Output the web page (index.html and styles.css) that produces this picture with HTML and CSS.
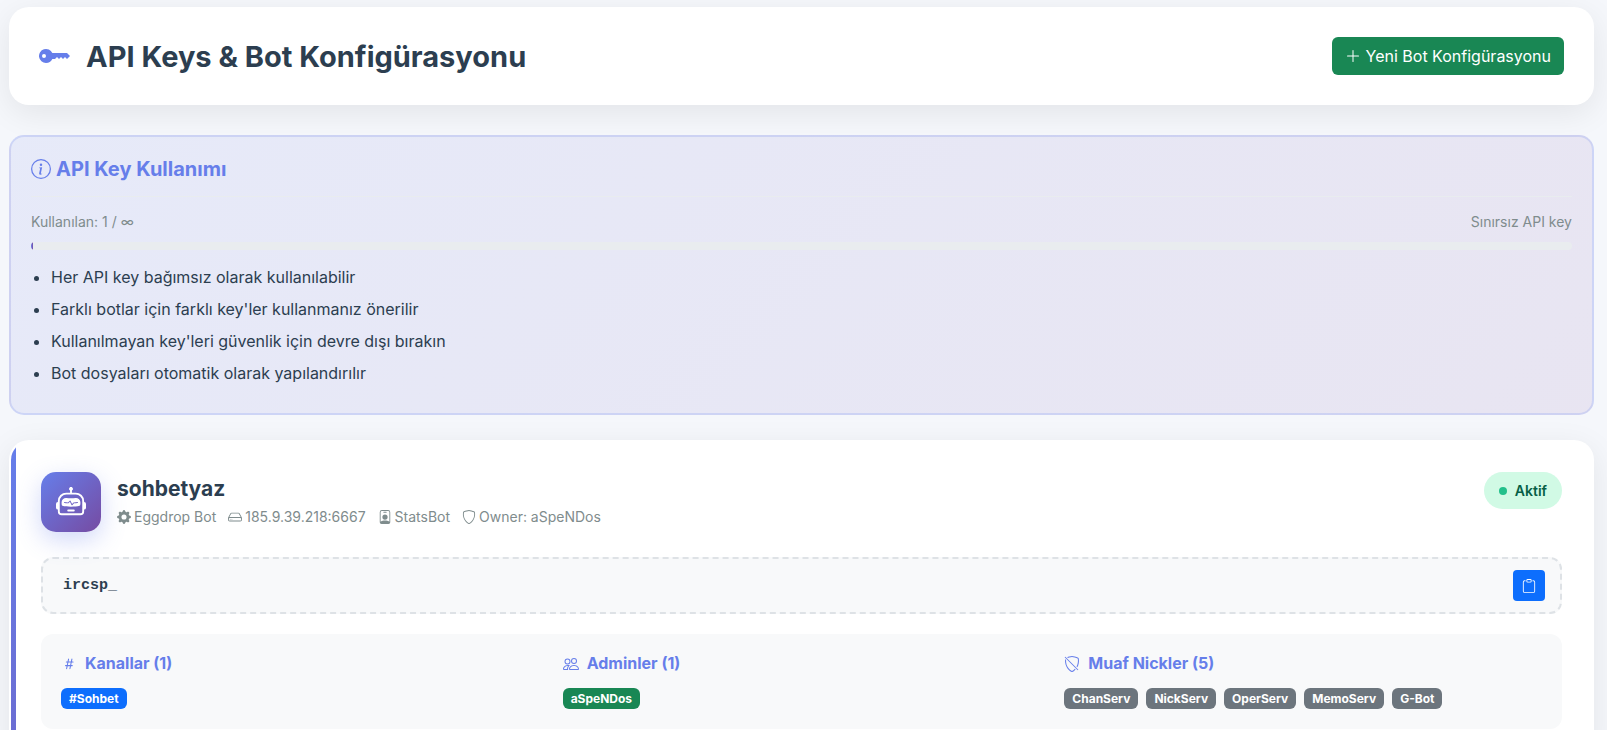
FILE: index.html
```html
<!DOCTYPE html>
<html lang="tr">
<head>
    <meta charset="UTF-8">
    <meta name="viewport" content="width=device-width, initial-scale=1.0">
    <title>API Keys & Bot Konfigürasyonu</title>
    <link rel="stylesheet" href="styles.css">
</head>
<body>

    <header class="page-header">
        <h1>
            <svg class="title-icon" viewBox="0 0 16 16" fill="currentColor" aria-hidden="true"><path d="M3.5 11.5a3.5 3.5 0 1 1 3.163-5H14L15.5 8 14 9.5l-1-1-1 1-1-1-1 1-1-1-1 1H6.663a3.5 3.5 0 0 1-3.163 2M2.5 9a1 1 0 1 0 0-2 1 1 0 0 0 0 2"/></svg>
            API Keys &amp; Bot Konfigürasyonu
        </h1>
        <button type="button" class="btn btn-success">
            <svg class="icon" viewBox="0 0 16 16" fill="currentColor" aria-hidden="true"><path d="M8 2a.5.5 0 0 1 .5.5v5h5a.5.5 0 0 1 0 1h-5v5a.5.5 0 0 1-1 0v-5h-5a.5.5 0 0 1 0-1h5v-5A.5.5 0 0 1 8 2"/></svg>
            Yeni Bot Konfigürasyonu
        </button>
    </header>

    <!-- API key kullanımı -->
    <section class="info-box">
        <h2>
            <svg class="icon-lg" viewBox="0 0 16 16" fill="currentColor" aria-hidden="true"><path d="M8 15A7 7 0 1 1 8 1a7 7 0 0 1 0 14m0 1A8 8 0 1 0 8 0a8 8 0 0 0 0 16"/><path d="m8.93 6.588-2.29.287-.082.38.45.083c.294.07.352.176.288.469l-.738 3.468c-.194.897.105 1.319.808 1.319.545 0 1.178-.252 1.465-.598l.088-.416c-.2.176-.492.246-.686.246-.275 0-.375-.193-.304-.533zM9 4.5a1 1 0 1 1-2 0 1 1 0 0 1 2 0"/></svg>
            API Key Kullanımı
        </h2>
        <div class="usage">
            <div class="usage-labels">
                <span>Kullanılan: 1 / ∞</span>
                <span>Sınırsız API key</span>
            </div>
            <div class="usage-bar">
                <div class="usage-fill"></div>
            </div>
        </div>
        <ul class="info-list">
            <li>Her API key bağımsız olarak kullanılabilir</li>
            <li>Farklı botlar için farklı key'ler kullanmanız önerilir</li>
            <li>Kullanılmayan key'leri güvenlik için devre dışı bırakın</li>
            <li>Bot dosyaları otomatik olarak yapılandırılır</li>
        </ul>
    </section>

    <!-- Bot kartı -->
    <article class="bot-card">
        <div class="bot-head">
            <div class="bot-avatar">
                <svg viewBox="0 0 16 16" fill="currentColor" aria-hidden="true"><path d="M6 12.5a.5.5 0 0 1 .5-.5h3a.5.5 0 0 1 0 1h-3a.5.5 0 0 1-.5-.5M3 8.062C3 6.76 4.235 5.765 5.53 5.886a26.6 26.6 0 0 0 4.94 0C11.765 5.765 13 6.76 13 8.062v1.157a.93.93 0 0 1-.765.935c-.845.147-2.34.346-4.235.346s-3.39-.2-4.235-.346A.93.93 0 0 1 3 9.219zm4.542-.827a.25.25 0 0 0-.217.068l-.92.9a25 25 0 0 1-1.871-.183.25.25 0 0 0-.068.495c.55.076 1.232.149 2.02.193a.25.25 0 0 0 .189-.071l.754-.736.847 1.71a.25.25 0 0 0 .404.062l.932-.97a25 25 0 0 0 1.922-.188.25.25 0 0 0-.068-.495c-.538.074-1.207.145-1.98.189a.25.25 0 0 0-.166.076l-.754.785-.842-1.7a.25.25 0 0 0-.182-.135"/><path d="M8.5 1.866a1 1 0 1 0-1 0V3h-2A4.5 4.5 0 0 0 1 7.5V8a1 1 0 0 0-1 1v2a1 1 0 0 0 1 1v1a2 2 0 0 0 2 2h10a2 2 0 0 0 2-2v-1a1 1 0 0 0 1-1V9a1 1 0 0 0-1-1v-.5A4.5 4.5 0 0 0 10.5 3h-2zM14 7.5V13a1 1 0 0 1-1 1H3a1 1 0 0 1-1-1V7.5A3.5 3.5 0 0 1 5.5 4h5A3.5 3.5 0 0 1 14 7.5"/></svg>
            </div>
            <div class="bot-info">
                <h3>sohbetyaz</h3>
                <div class="bot-meta">
                    <span>
                        <svg class="icon-sm" viewBox="0 0 16 16" fill="currentColor" aria-hidden="true"><path d="M9.405 1.05c-.413-1.4-2.397-1.4-2.81 0l-.1.34a1.464 1.464 0 0 1-2.105.872l-.31-.17c-1.283-.698-2.686.705-1.987 1.987l.169.311c.446.82.023 1.841-.872 2.105l-.34.1c-1.4.413-1.4 2.397 0 2.81l.34.1a1.464 1.464 0 0 1 .872 2.105l-.17.31c-.698 1.283.705 2.686 1.987 1.987l.311-.169a1.464 1.464 0 0 1 2.105.872l.1.34c.413 1.4 2.397 1.4 2.81 0l.1-.34a1.464 1.464 0 0 1 2.105-.872l.31.17c1.283.698 2.686-.705 1.987-1.987l-.169-.311a1.464 1.464 0 0 1 .872-2.105l.34-.1c1.4-.413 1.4-2.397 0-2.81l-.34-.1a1.464 1.464 0 0 1-.872-2.105l.17-.31c.698-1.283-.705-2.686-1.987-1.987l-.311.169a1.464 1.464 0 0 1-2.105-.872zM8 10.93a2.929 2.929 0 1 1 0-5.86 2.929 2.929 0 0 1 0 5.858z"/></svg>
                        Eggdrop Bot
                    </span>
                    <span>
                        <svg class="icon-sm" viewBox="0 0 16 16" fill="currentColor" aria-hidden="true"><path d="M4.5 11a.5.5 0 1 0 0-1 .5.5 0 0 0 0 1M3 10.5a.5.5 0 1 1-1 0 .5.5 0 0 1 1 0"/><path d="M16 11a2 2 0 0 1-2 2H2a2 2 0 0 1-2-2V9.51c0-.418.105-.83.305-1.197l2.472-4.531A1.5 1.5 0 0 1 4.094 3h7.812a1.5 1.5 0 0 1 1.317.782l2.472 4.53c.2.368.305.78.305 1.198zM3.655 4.26 1.592 8.043Q1.79 8 2 8h12q.21 0 .408.042L12.345 4.26a.5.5 0 0 0-.439-.26H4.094a.5.5 0 0 0-.44.26zM1 10v1a1 1 0 0 0 1 1h12a1 1 0 0 0 1-1v-1a1 1 0 0 0-1-1H2a1 1 0 0 0-1 1"/></svg>
                        185.9.39.218:6667
                    </span>
                    <span>
                        <svg class="icon-sm" viewBox="0 0 16 16" fill="currentColor" aria-hidden="true"><path d="M6.5 2a.5.5 0 0 0 0 1h3a.5.5 0 0 0 0-1zM11 8a3 3 0 1 1-6 0 3 3 0 0 1 6 0"/><path d="M4.5 0A2.5 2.5 0 0 0 2 2.5V14a2 2 0 0 0 2 2h8a2 2 0 0 0 2-2V2.5A2.5 2.5 0 0 0 11.5 0zM3 2.5A1.5 1.5 0 0 1 4.5 1h7A1.5 1.5 0 0 1 13 2.5v10.795a4.2 4.2 0 0 0-.776-.492C11.392 12.387 10.063 12 8 12s-3.392.387-4.224.803a4.2 4.2 0 0 0-.776.492z"/></svg>
                        StatsBot
                    </span>
                    <span>
                        <svg class="icon-sm" viewBox="0 0 16 16" fill="currentColor" aria-hidden="true"><path d="M5.338 1.59a61 61 0 0 0-2.837.856.48.48 0 0 0-.328.39c-.554 4.157.726 7.19 2.253 9.188a10.7 10.7 0 0 0 2.287 2.233c.346.244.652.42.893.533q.18.085.293.118a1 1 0 0 0 .101.025 1 1 0 0 0 .1-.025q.114-.034.294-.118c.24-.113.547-.29.893-.533a10.7 10.7 0 0 0 2.287-2.233c1.527-1.997 2.807-5.031 2.253-9.188a.48.48 0 0 0-.328-.39c-.651-.213-1.75-.56-2.837-.855C9.552 1.29 8.531 1.067 8 1.067c-.53 0-1.552.223-2.662.524zM5.072.56C6.157.265 7.31 0 8 0s1.843.265 2.928.56c1.11.3 2.229.655 2.887.87a1.54 1.54 0 0 1 1.044 1.262c.596 4.477-.787 7.795-2.465 9.99a11.8 11.8 0 0 1-2.517 2.453 7 7 0 0 1-1.048.625c-.28.132-.581.24-.829.24s-.548-.108-.829-.24a7 7 0 0 1-1.048-.625 11.8 11.8 0 0 1-2.517-2.453C1.928 10.487.545 7.169 1.141 2.692A1.54 1.54 0 0 1 2.185 1.43 63 63 0 0 1 5.072.56"/></svg>
                        Owner: aSpeNDos
                    </span>
                </div>
            </div>
            <span class="status">Aktif</span>
        </div>

        <div class="key-box">
            <code>ircsp_</code>
            <button type="button" class="btn btn-copy" aria-label="Kopyala">
                <svg class="icon-sm" viewBox="0 0 16 16" fill="currentColor" aria-hidden="true"><path d="M4 1.5H3a2 2 0 0 0-2 2V14a2 2 0 0 0 2 2h10a2 2 0 0 0 2-2V3.5a2 2 0 0 0-2-2h-1v1h1a1 1 0 0 1 1 1V14a1 1 0 0 1-1 1H3a1 1 0 0 1-1-1V3.5a1 1 0 0 1 1-1h1z"/><path d="M9.5 1a.5.5 0 0 1 .5.5v1a.5.5 0 0 1-.5.5h-3a.5.5 0 0 1-.5-.5v-1a.5.5 0 0 1 .5-.5zm-3-1A1.5 1.5 0 0 0 5 1.5v1A1.5 1.5 0 0 0 6.5 4h3A1.5 1.5 0 0 0 11 2.5v-1A1.5 1.5 0 0 0 9.5 0z"/></svg>
            </button>
        </div>

        <div class="bot-settings">
            <div>
                <h4>
                    <svg class="icon" viewBox="0 0 16 16" fill="currentColor" aria-hidden="true"><path d="M8.39 12.648a1 1 0 0 0-.015.18c0 .305.21.508.5.508.266 0 .492-.172.555-.477l.554-2.703h1.204c.421 0 .617-.234.617-.547 0-.312-.188-.53-.617-.53h-.985l.516-2.524h1.265c.43 0 .618-.227.618-.547 0-.313-.188-.524-.618-.524h-1.046l.476-2.304a1 1 0 0 0 .016-.164.51.51 0 0 0-.516-.516.54.54 0 0 0-.539.43l-.523 2.554H7.617l.477-2.304c.008-.04.015-.118.015-.164a.51.51 0 0 0-.523-.516.54.54 0 0 0-.531.43L6.53 5.484H5.414c-.43 0-.617.22-.617.532s.187.539.617.539h.906l-.515 2.523H4.609c-.421 0-.609.219-.609.531s.188.547.61.547h.976l-.516 2.492c-.008.04-.015.125-.015.18 0 .305.21.508.5.508.265 0 .492-.172.554-.477l.555-2.703h2.242zm-1-6.109h2.266l-.515 2.563H6.859l.532-2.563z"/></svg>
                    Kanallar (1)
                </h4>
                <div class="tags">
                    <span class="tag tag-primary">#Sohbet</span>
                </div>
            </div>
            <div>
                <h4>
                    <svg class="icon" viewBox="0 0 16 16" fill="currentColor" aria-hidden="true"><path d="M15 14s1 0 1-1-1-4-5-4-5 3-5 4 1 1 1 1zm-7.978-1L7 12.996c.001-.264.167-1.03.76-1.72C8.312 10.629 9.282 10 11 10c1.717 0 2.687.63 3.24 1.276.593.69.758 1.457.76 1.72l-.008.002-.014.002zM11 7a2 2 0 1 0 0-4 2 2 0 0 0 0 4m3-2a3 3 0 1 1-6 0 3 3 0 0 1 6 0M6.936 9.28a6 6 0 0 0-1.23-.247A7 7 0 0 0 5 9c-4 0-5 3-5 4q0 1 1 1h4.216A2.24 2.24 0 0 1 5 13c0-1.01.377-2.042 1.09-2.904.243-.294.526-.569.846-.816M4.92 10A5.5 5.5 0 0 0 4 13H1c0-.26.164-1.03.76-1.724.545-.636 1.492-1.256 3.16-1.275ZM1.5 5.5a3 3 0 1 1 6 0 3 3 0 0 1-6 0m3-2a2 2 0 1 0 0 4 2 2 0 0 0 0-4"/></svg>
                    Adminler (1)
                </h4>
                <div class="tags">
                    <span class="tag tag-success">aSpeNDos</span>
                </div>
            </div>
            <div>
                <h4>
                    <svg class="icon" viewBox="0 0 16 16" fill="currentColor" fill-rule="evenodd" aria-hidden="true"><path d="M1.093 3.093c-.465 4.275.885 7.46 2.513 9.589a11.8 11.8 0 0 0 2.517 2.453c.386.273.744.482 1.048.625.28.132.581.24.829.24s.548-.108.829-.24a7 7 0 0 0 1.048-.625 11.3 11.3 0 0 0 1.733-1.525l-.745-.745a10.3 10.3 0 0 1-1.578 1.392c-.346.244-.652.42-.893.533q-.18.085-.294.118a1 1 0 0 1-.1.025 1 1 0 0 1-.1-.025 2 2 0 0 1-.294-.118 6 6 0 0 1-.893-.533 10.7 10.7 0 0 1-2.287-2.233C3.053 10.228 1.879 7.594 2.06 4.06zM3.98 1.98l-.852-.852A59 59 0 0 1 5.072.559C6.157.266 7.31 0 8 0s1.843.265 2.928.56c1.11.3 2.229.655 2.887.87a1.54 1.54 0 0 1 1.044 1.262c.483 3.626-.332 6.491-1.551 8.616l-.77-.77c1.042-1.915 1.72-4.469 1.29-7.702a.48.48 0 0 0-.33-.39c-.65-.213-1.75-.56-2.836-.855C9.552 1.29 8.531 1.067 8 1.067c-.53 0-1.552.223-2.662.524A50 50 0 0 0 3.98 1.98m9.666 12.374-13-13 .708-.708 13 13z"/></svg>
                    Muaf Nickler (5)
                </h4>
                <div class="tags">
                    <span class="tag">ChanServ</span>
                    <span class="tag">NickServ</span>
                    <span class="tag">OperServ</span>
                    <span class="tag">MemoServ</span>
                    <span class="tag">G-Bot</span>
                </div>
            </div>
        </div>
    </article>

</body>
</html>
```

FILE: styles.css
```css
* {
    box-sizing: border-box;
}
body {
    font-family: Inter, "Liberation Sans", sans-serif;
    font-size: 16px;
    line-height: 24px;
    margin: 0;
    padding: 7px 13px 30px 9px;
    background-color: #f5f7fb;
    color: #2c3e50;
}
h1, h2, h3, h4 {
    margin: 0;
    font-weight: 700;
}
svg {
    flex-shrink: 0;
}
.icon {
    width: 16px;
    height: 16px;
}
.icon-sm {
    width: 14px;
    height: 14px;
}
.icon-lg {
    width: 20px;
    height: 20px;
}

/* Üst başlık */
.page-header {
    display: flex;
    justify-content: space-between;
    align-items: center;
    padding: 30px;
    margin-bottom: 30px;
    background-color: #fff;
    border-radius: 20px;
    box-shadow: 0 8px 32px rgba(0, 0, 0, 0.08);
}
.page-header h1 {
    display: flex;
    align-items: center;
    gap: 15px;
    font-size: 29px;
    line-height: 35px;
}
.title-icon {
    width: 32px;
    height: 32px;
    color: #667eea;
}
.btn {
    display: inline-flex;
    align-items: center;
    justify-content: center;
    gap: 5px;
    border: none;
    color: #fff;
    font-family: inherit;
    font-size: 16px;
    line-height: 24px;
    cursor: pointer;
}
.btn-success {
    padding: 7px 13px;
    background-color: #198754;
    border-radius: 6px;
}
.btn-success:hover {
    background-color: #157347;
}

/* Bilgi kutusu */
.info-box {
    padding: 20px;
    margin-bottom: 25px;
    border: 2px solid rgba(102, 126, 234, 0.2);
    border-radius: 15px;
    background: linear-gradient(135deg, rgba(102, 126, 234, 0.1), rgba(118, 75, 162, 0.1));
}
.info-box h2 {
    display: flex;
    align-items: center;
    gap: 5px;
    margin-bottom: 15px;
    font-size: 20px;
    line-height: 24px;
    color: #667eea;
}
.usage {
    padding-top: 15px;
    border-top: 1px solid #e9ecef;
}
.usage-labels {
    display: flex;
    justify-content: space-between;
    margin-bottom: 10px;
    font-size: 14px;
    line-height: 20px;
    color: #7f8c8d;
}
.usage-bar {
    height: 8px;
    border-radius: 10px;
    background-color: #e9ecef;
    overflow: hidden;
}
.usage-fill {
    width: 2px;
    height: 100%;
    background: linear-gradient(90deg, #667eea, #764ba2);
}
.info-list {
    margin: 11px 0 4px;
    padding-left: 20px;
    line-height: 32px;
}

/* Bot kartı */
.bot-card {
    position: relative;
    padding: 30px;
    border: 2px solid transparent;
    border-radius: 20px;
    background-color: #fff;
    box-shadow: 0 8px 32px rgba(0, 0, 0, 0.08);
    overflow: hidden;
}
.bot-card::before {
    content: "";
    position: absolute;
    top: 0;
    left: 0;
    width: 5px;
    height: 100%;
    background: linear-gradient(180deg, #667eea, #764ba2 900px);
}
.bot-head {
    display: flex;
    align-items: flex-start;
    gap: 16px;
    margin-bottom: 25px;
}
.bot-avatar {
    display: flex;
    align-items: center;
    justify-content: center;
    width: 60px;
    height: 60px;
    border-radius: 15px;
    background: linear-gradient(135deg, #667eea, #764ba2);
    box-shadow: 0 8px 24px rgba(102, 126, 234, 0.3);
    color: #fff;
}
.bot-avatar svg {
    width: 30px;
    height: 30px;
}
.bot-info {
    flex: 1;
    padding-top: 4px;
}
.bot-info h3 {
    margin-bottom: 5px;
    font-size: 21px;
    line-height: 25px;
}
.bot-meta {
    display: flex;
    flex-wrap: wrap;
    gap: 12px;
    font-size: 14px;
    line-height: 22px;
    color: #7f8c8d;
}
.bot-meta span {
    display: flex;
    align-items: center;
    gap: 3px;
}
.status {
    display: flex;
    align-items: center;
    gap: 8px;
    padding: 8px 15px;
    border-radius: 20px;
    background-color: #d1fae5;
    color: #065f46;
    font-size: 14px;
    line-height: 21px;
    font-weight: 600;
}
.status::before {
    content: "";
    width: 8px;
    height: 8px;
    border-radius: 50%;
    background-color: #10b981;
    opacity: 0.9;
}
.key-box {
    display: flex;
    align-items: center;
    justify-content: space-between;
    padding: 11px 15px 11px 20px;
    margin-bottom: 20px;
    border: 2px dashed #dee2e6;
    border-radius: 12px;
    background-color: #f8f9fa;
}
.key-box code {
    font-family: "Courier New", "Liberation Mono", monospace;
    font-size: 15px;
    font-weight: 600;
}
.btn-copy {
    width: 32px;
    height: 31px;
    padding: 0;
    background-color: #0d6efd;
    border-radius: 4px;
}
.btn-copy:hover {
    background-color: #0b5ed7;
}

/* Kanallar, adminler, muaf nickler */
.bot-settings {
    display: grid;
    grid-template-columns: repeat(3, 1fr);
    gap: 24px;
    padding: 20px;
    border-radius: 12px;
    background-color: #f8f9fa;
}
.bot-settings h4 {
    display: flex;
    align-items: center;
    gap: 8px;
    margin-bottom: 15px;
    font-size: 16px;
    line-height: 19px;
    color: #667eea;
}
.tags {
    display: flex;
    flex-wrap: wrap;
    gap: 8px;
}
.tag {
    padding: 4px 8px;
    border-radius: 6px;
    background-color: #6c757d;
    color: #fff;
    font-size: 12px;
    line-height: 13px;
    font-weight: 700;
}
.tag-primary {
    background-color: #0d6efd;
}
.tag-success {
    background-color: #198754;
}
```
